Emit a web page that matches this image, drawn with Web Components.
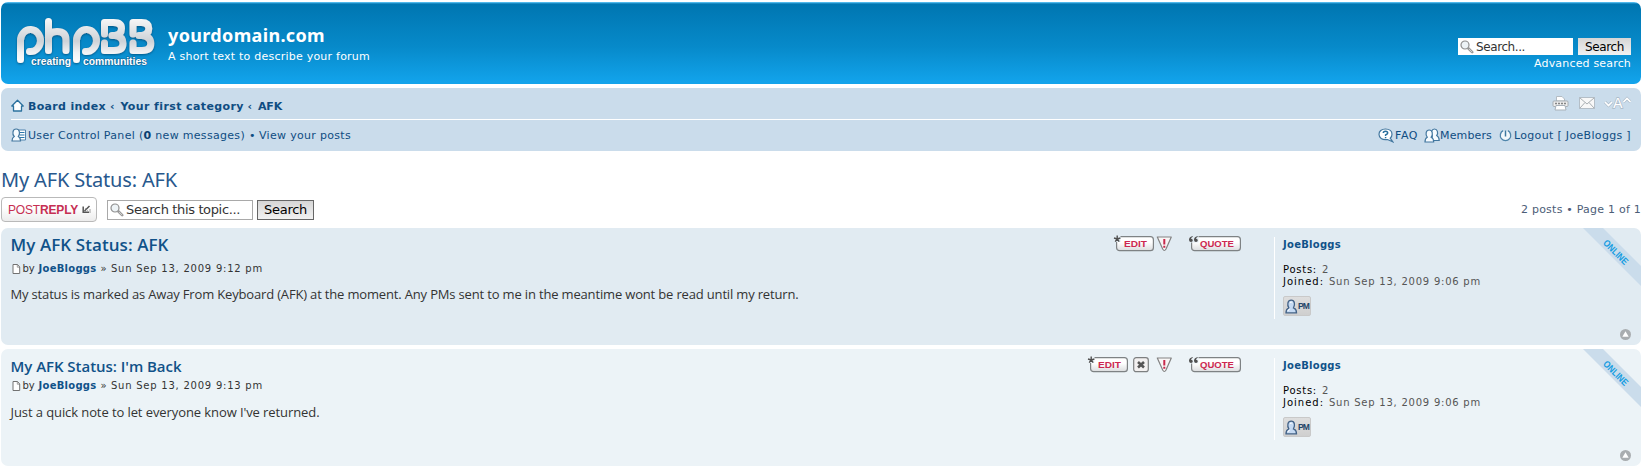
<!DOCTYPE html>
<html lang="en"><head><meta charset="utf-8"><title>yourdomain.com - My AFK Status: AFK</title>
<style>html,body{margin:0;background:#fff;overflow:hidden}body{font-family:"DejaVu Sans",Verdana,sans-serif;font-size:11px;color:#333}</style></head><body><forum-page></forum-page>
<script>
const def=(name,html,after)=>customElements.define(name,class extends HTMLElement{connectedCallback(){if(this.shadowRoot)return;const r=this.attachShadow({mode:'open'});r.innerHTML=typeof html==='function'?html(this):html;if(after)after(this,r)}});

/* one line of text whose tracking is tuned to a given advance width */
def('text-run','<style>:host{display:block;white-space:pre;flex:none;line-height:16px}span{display:inline-block}</style><span><slot></slot></span>',(el,r)=>{
  const s=r.querySelector('span');
  const fit=()=>{const w=+el.getAttribute('w');if(!w)return;s.style.letterSpacing='0';const n=[...el.textContent].length;s.style.letterSpacing=((w-s.getBoundingClientRect().width)/n)+'px';el.style.width=w+'px'};
  requestAnimationFrame(fit);queueMicrotask(fit)});

const ICONS={
home:[13,13,'<path d="M.8 7 6.500 1.200 12.200 7H10.500V12H2.500V7Z" fill="#fff" stroke="#2b719e" stroke-width="1.300" stroke-linejoin="round"/>'],
ucp:[16,14,'<path d="M8 2H14.500V12H8" fill="#fff" stroke="#4f83ae"/><path d="M9 4.500H13.500M9 7H13.500M9 9.500H13.500" stroke="#2b75aa" stroke-width="1.200"/><path d="M1 13C1 10.500 1.700 9.300 3.200 8.500C1 6 1.500 1 5.200 1S9.300 6 7.300 8.500C9 9.300 9.500 10.500 9.500 13Z" fill="#f6fbff" stroke="#42779f" stroke-width="1.200"/>'],
print:[17,16,'<path d="M4.500 6V1.500H10L12.500 4V6Z" fill="#fff" stroke="#b4bcc3"/><rect x="1" y="6" width="15" height="5.500" rx="1" fill="#ededed" stroke="#a0a7ad" stroke-width=".9"/><path d="M3 8.500H14" stroke="#858585" stroke-width="1.400" stroke-dasharray="2 1"/><path d="M4 10.500H13L14 15H3Z" fill="#fff" stroke="#a9b2ba"/>'],
mail:[16,12,'<rect x=".5" y=".5" width="15" height="11" fill="#f8f8f8" stroke="#b4bec7"/><path d="M1 1 8 7 15 1M1 11 6 5.500M15 11 10 5.500" fill="none" stroke="#a0a7ac" stroke-width=".9"/>'],
faq:[16,15,'<path d="M7.500 1C11.500 1 14 3.200 14 6.200C14 8 13.300 9.300 12.200 10.200L14.800 13.800 9.500 11.500C4 12.300 1 9.800 1 6.200C1 3.200 3.500 1 7.500 1Z" fill="#fff" stroke="#42779f" stroke-width="1.200"/><path d="M5.300 5Q5.300 3.200 7.500 3.200T9.700 5Q9.700 6 7.600 6.900V8M7.600 9V10.300" fill="none" stroke="#296f9d" stroke-width="1.500"/>'],
members:[16,15,'<path d="M7.500 12.500C8 9 8.500 8.500 8.300 7.500C6.500 5 7.500 1 10.500 1S14.500 5 12.700 7.500C14.500 8.500 15.200 10 15.200 12.500Z" fill="#f6fbff" stroke="#42779f" stroke-width="1.200"/><path d="M1 14C1 11.500 1.700 10 3.200 9.200C1.200 6.500 1.800 2 5.200 2S9.200 6.500 7.200 9.200C9 10 9.700 11.500 9.700 14Z" fill="#f6fbff" stroke="#42779f" stroke-width="1.200"/>'],
power:[13,13,'<path d="M4.200 1.700A5.200 5.200 0 1 0 8.800 1.700" fill="#f2f8fc" stroke="#4f85aa" stroke-width="1.300"/><path d="M6.500 1.500V7.500" stroke="#3e789f" stroke-width="1.500"/>'],
lens:[14,14,'<path d="M8 8 12.200 12.200" stroke="#9a9a9a" stroke-width="2.600" stroke-linecap="round"/><path d="M9 9 12 12" stroke="#ddd" stroke-width=".8"/><circle cx="5" cy="5" r="4" fill="#edf3f6" stroke="#8f8f8f" stroke-width="1.200"/>'],
page:[9,11,'<path d="M1 .5H5.500L7.700 3V9.500H1Z" fill="#fff" stroke="#727272"/><path d="M5.300 .7V3.200H7.600" fill="none" stroke="#777" stroke-width=".7"/>'],
reply:[9,9,'<path d="M7.500 1 2.500 6M1.200 1.500V7.300H7" fill="none" stroke="#555" stroke-width="1.500"/><path d="M3.500 3.500 5.500 5.500" stroke="#777" stroke-width="1"/><path d="M8 4V8" stroke="#888" stroke-width=".8"/>'],
report:[17,16,'<path d="M1.300 1H15.300L10 13Q8.300 16 6.700 13Z" fill="#f8f6f6" stroke="#838383" stroke-width="1.200" stroke-linejoin="round"/><path d="M8.300 3V8.500M8.300 9.700V11.700" stroke="#c8294b" stroke-width="2"/>'],
del:[16,16,'<rect x=".7" y=".7" width="14.600" height="14" rx="2.500" fill="#f3f1f1" stroke="#7d7f80" stroke-width="1.200"/><path d="M5 5 11 10.500M11 5 5 10.500" stroke="#555" stroke-width="2.600"/>'],
person:[13,15,'<path d="M1 13.800C1 11 1.800 9.800 3.800 8.900C2 6 2.500 1.200 6.200 1.200S10.200 6 8.500 8.900C10.700 9.800 11.500 11 11.500 13.800Z" fill="#c5daf3" stroke="#426287" stroke-width="1.300"/><path d="M5 3.500Q6.500 2.500 7.500 4M3 12Q3 10.500 5 9.900" fill="none" stroke="#fff"/>'],
top:[11,11,'<circle cx="5.500" cy="5.500" r="5.500" fill="#a9adb0"/><path d="M5.500 2.300 8.700 7.800H2.300Z" fill="#fff"/>']};
def('ui-icon',el=>{const [w,h,p]=ICONS[el.getAttribute('name')];return `<style>:host{display:block;flex:none}svg{display:block}</style><svg width="${w}" height="${h}" viewBox="0 0 ${w} ${h}" fill="none">${p}</svg>`});

def('brand-logo',`<style>:host{display:block;width:142px;height:54px}svg{display:block;overflow:visible}</style>
<svg width="142" height="54" viewBox="0 0 142 54"><defs><linearGradient id="u" gradientUnits="userSpaceOnUse" x1="0" y1="2" x2="0" y2="48"><stop offset="0" stop-color="#f8f8f8"/><stop offset=".5" stop-color="#cdd2d7"/><stop offset=".75" stop-color="#f0f2f4"/><stop offset="1" stop-color="#fff"/></linearGradient><filter id="s" x="-10%" y="-10%" width="120%" height="130%"><feDropShadow dx="0" dy="1" stdDeviation=".8" flood-color="#034b75" flood-opacity=".8"/></filter></defs>
<g filter="url(#s)" fill="none" stroke="url(#u)" stroke-width="7" stroke-linecap="round" stroke-linejoin="round">
<path d="M4.500 43.500V24.500A10 11 0 1 1 13.500 35.500"/><path d="M32.500 5.500V34.500M32.500 21Q34 15.500 41 15.500Q50 15.500 50 24V34.500"/><path d="M60.500 43.500V24.500A10 11 0 1 1 69.500 35.500"/>
<path d="M88.500 18V6.500H97.500Q105.500 6.500 105.500 12.500Q105.500 18.500 99 19.500H96M99 19.500Q107 20.500 107 27.500Q107 34.500 98 34.500H88.500V27"/><path d="M117 18V6.500H125.500Q132.800 6.500 132.800 12.500Q132.800 18.500 126 19.500H123M126 19.500Q134.800 20.500 134.800 27.500Q134.800 34.500 126 34.500H117V27"/></g>
<g font-family="Liberation Sans,Arial,sans-serif" font-size="10.500" fill="#fff" stroke="#14679a" stroke-width="1.200" paint-order="stroke" font-weight="bold"><text x="15" y="48.500" textLength="40" lengthAdjust="spacingAndGlyphs">creating</text><text x="67" y="48.500" textLength="64" lengthAdjust="spacingAndGlyphs">communities</text></g></svg>`);

def('search-form',el=>{const big=el.hasAttribute('big');return `<style>:host{display:flex;gap:${big?'4px':'5px'};font-size:${big?13:12}px;color:#333}
.i{box-sizing:border-box;display:flex;align-items:center;background:#fff;width:${big?146:115}px;height:${big?20:17}px;border:${big?'1px solid #a9a9a9':'0'};padding-left:2px;gap:2px}
.b{box-sizing:border-box;display:flex;align-items:center;justify-content:center;width:${big?57:53}px;height:${big?20:17}px;color:#000;background:linear-gradient(#d6d6d6,#f1f1f1);border:${big?'1px solid #666':'0'}}</style>
<div class="i"><ui-icon name="lens"></ui-icon><text-run w="${big?114:49}">${el.getAttribute('hint')}</text-run></div><div class="b"><text-run w="${big?43:39}">Search</text-run></div>`});

def('header-bar',`<style>:host{display:flex;box-sizing:border-box;height:82px;border-radius:7px;background:linear-gradient(#6aceff 0,#0076b1 2px,#078aca 45px,#12a3eb 80px);color:#fff;padding:14px 10px 0 15px}
.t{margin-left:10px;padding-top:8px;flex:1}.n{font:bold 18px "Noto Sans","DejaVu Sans",sans-serif}.n text-run{line-height:22px}.d{margin-top:3px}
.r{padding-top:22px;display:flex;flex-direction:column;align-items:flex-end}.r text-run{margin-top:1px}</style>
<brand-logo></brand-logo><div class="t"><div class="n"><text-run w="157">yourdomain.com</text-run></div><div class="d"><text-run w="202">A short text to describe your forum</text-run></div></div>
<div class="r"><search-form hint="Search..."></search-form><text-run w="97">Advanced search</text-run></div>`);

def('nav-bar',`<style>:host{display:block;box-sizing:border-box;height:63px;margin-top:4px;border-radius:7px;background:#cadceb;padding:0 10px 0 10px;color:#4c5d77}
.row{display:flex;align-items:center;color:#0f4d82}.a{height:32px;border-bottom:1px solid #fff;font-weight:bold;box-sizing:border-box}.a text-run{margin-top:6px}.a ui-icon{margin-top:3px}.a .low{margin-top:-2px}.b{height:23px}.b text-run{margin-top:8px}.b ui-icon{margin-top:7px}.sp{flex:1}b{color:#0b3f70}
.fs{display:block;margin:-3px 0 0 9px}</style>
<div class="row a"><ui-icon name="home"></ui-icon><text-run w="78" style="margin-left:4px">Board index</text-run><text-run w="6" style="margin-left:4px">‹</text-run><text-run w="123" style="margin-left:4.500px">Your first category</text-run><text-run w="6" style="margin-left:4px">‹</text-run><text-run w="24" style="margin-left:4.500px">AFK</text-run><span class="sp"></span><ui-icon name="print" class="low"></ui-icon><ui-icon name="mail" class="low" style="margin-left:10px"></ui-icon>
<svg class="fs" width="27" height="15" viewBox="0 0 27 15"><path d="M1 7 4.500 10.500 8 7M19.500 7 23 3.500 26.500 7" fill="none" stroke="#a9b9c7" stroke-width="3"/><path d="M1 7 4.500 10.500 8 7M19.500 7 23 3.500 26.500 7" fill="none" stroke="#fff" stroke-width="1.700"/><text x="9" y="13" font-family="DejaVu Sans" font-weight="normal" font-size="14" fill="#fff" stroke="#a9b9c7" stroke-width="1.400" paint-order="stroke">A</text></svg></div>
<div class="row b"><ui-icon name="ucp"></ui-icon><text-run w="217" style="margin-left:1px">User Control Panel (<b>0</b> new messages)</text-run><text-run w="6" style="margin-left:4px">•</text-run><text-run w="92" style="margin-left:4px">View your posts</text-run><span class="sp"></span>
<ui-icon name="faq"></ui-icon><text-run w="23" style="margin-left:1px">FAQ</text-run><ui-icon name="members" style="margin-left:6px"></ui-icon><text-run w="52">Members</text-run><ui-icon name="power" style="margin-left:7px"></ui-icon><text-run w="117" style="margin-left:2px">Logout [ JoeBloggs ]</text-run></div>`);

def('tag-button',el=>{const q=el.getAttribute('kind')==='quote',w=q?50:38;return `<style>:host{display:block;flex:none;width:${w+2}px;height:16px}svg{display:block;overflow:visible}</style><svg width="${w+2}" height="16"><defs><linearGradient id="b" x1="0" y1="0" x2="0" y2="1"><stop offset=".4" stop-color="#fff"/><stop offset="1" stop-color="#dadcde"/></linearGradient></defs><rect x="2.600" y=".7" width="${w-1.200}" height="14" rx="3" fill="url(#b)" stroke="#7e8284" stroke-width="1.200"/><text x="${q?11:10}" y="11" font-family="Liberation Sans" font-weight="bold" font-size="9.800" fill="#cd2850" textLength="${q?34:23}" lengthAdjust="spacingAndGlyphs">${q?'QUOTE':'EDIT'}</text>${q?'<path d="M-.3 -1H9.500V6.500H-.3Z" fill="var(--post-bg)"/><path d="M3.600 0Q-.2 1 0 4Q.2 6 2 6Q3.800 6 3.800 4.300Q3.800 2.700 2 2.700Q2.400 1.300 3.800 .8ZM8.600 0Q4.800 1 5 4Q5.200 6 7 6Q8.800 6 8.800 4.300Q8.800 2.700 7 2.700Q7.400 1.300 8.800 .8Z" fill="#505050"/>':'<path d="M0 -1H6.500V6H0Z" fill="var(--post-bg)"/><path d="M3.200 -.5V3M0 2 3.200 3 6.400 2M1.200 5.700 3.200 3 5.200 5.700" fill="none" stroke="#505050" stroke-width="1.400"/>'}</svg>`});

def('pm-button','<style>:host{display:flex;box-sizing:border-box;width:28px;height:20px;border:1px solid #c9c9c9;border-radius:2px;background:linear-gradient(#dedede,#cfcfcf);align-items:center;padding-left:1px;font:bold 8.500px "Liberation Sans",sans-serif;color:#24466a}</style><ui-icon name="person"></ui-icon><text-run w="11">PM</text-run>');

def('author-profile','<style>:host{display:block;box-sizing:border-box;width:367px;height:82px;border-left:1px solid #fff;padding:0 0 0 8px;font-size:10px;color:#6b7680}.n{font-weight:bold;color:#105289}.n text-run{line-height:16px}.l{display:flex;gap:5px;color:#555}.l text-run{line-height:12px}.k{color:#000}pm-button{margin-top:8px}</style><div class="n"><text-run w="58">JoeBloggs</text-run></div><div class="l" style="margin-top:11px"><text-run class="k" w="34">Posts:</text-run><text-run w="7">2</text-run></div><div class="l"><text-run class="k" w="41">Joined:</text-run><text-run w="152">Sun Sep 13, 2009 9:06 pm</text-run></div><pm-button></pm-button>');

def('forum-post',el=>{const f=el.hasAttribute('first');return `<style>:host{--post-bg:${f?'#e1ebf2':'#ecf3f7'};display:flex;position:relative;overflow:hidden;box-sizing:border-box;height:117px;border-radius:7px;background:var(--post-bg);padding:10px 0 0 9.500px}
.m{flex:1}.h{display:flex;height:${f?23:19}px;color:#105289;font:600 ${f?17:15}px "Open Sans","Noto Sans",sans-serif}.h text-run{line-height:20px;margin-top:-3px}
.act{display:flex;margin:-2px 33px 0 auto}.by{display:flex;font-size:10px;height:16px;align-items:center}.by b{color:#105289}
.c{margin-top:${f?'9px':'10px'};font:13px "Open Sans","Noto Sans",sans-serif;color:#333}
author-profile{margin-top:-1px}.rib{position:absolute;right:0;top:0}.top{position:absolute;right:10px;bottom:5px}</style>
<div class="m"><div class="h"><text-run w="${f?158:171}"><slot name="title"></slot></text-run><div class="act"><tag-button kind="edit" style="margin-right:${f?2:5}px"></tag-button>${f?'':'<ui-icon name="del" style="margin-right:7px"></ui-icon>'}<ui-icon name="report" style="margin-right:16px"></ui-icon><tag-button kind="quote"></tag-button></div></div>
<div class="by"><ui-icon name="page" style="margin:0 2px 0 1px"></ui-icon><text-run w="12">by</text-run><text-run w="58" style="margin-left:4px"><b>JoeBloggs</b></text-run><text-run w="7" style="margin-left:4px">»</text-run><text-run w="152" style="margin-left:3.500px"><slot name="date"></slot></text-run></div>
<div class="c"><text-run w="${f?788:309}"><slot></slot></text-run></div></div><author-profile></author-profile>
<svg class="rib" width="60" height="60" viewBox="0 0 60 60"><path d="M2 0H22L60 38V58Z" fill="#cadceb"/><text transform="translate(21.500 15.500) rotate(45)" font-family="Liberation Sans" font-weight="bold" font-size="9.500" fill="#159de2" textLength="31" lengthAdjust="spacingAndGlyphs">ONLINE</text></svg><ui-icon class="top" name="top"></ui-icon>`},(el,r)=>{
  for(const run of r.querySelectorAll('text-run')){const s=run.querySelector('slot');if(s){run.textContent=s.name?el.querySelector('[slot='+s.name+']').textContent:[...el.childNodes].filter(n=>n.nodeType===3).map(n=>n.data).join('').trim()}}});

def('topic-bar',`<style>:host{display:block;height:77px}.h{padding-top:17px;font:20px "Noto Sans",sans-serif;color:#28588d}.h text-run{line-height:24px}
.r{display:flex;align-items:flex-start;margin-top:5px}.p{box-sizing:border-box;width:96px;height:25px;border:1px solid #b9b9b9;border-radius:4px;background:linear-gradient(#fff 40%,#ececec);display:flex;align-items:center;padding-left:6px;font:12px "Liberation Sans",sans-serif;color:#c62f52}.p text-run{margin-right:4px}
search-form{margin:3px 0 0 10px}.c{margin:5px 0 0 auto;color:#4c5d77}</style>
<div class="h"><text-run w="176">My AFK Status: AFK</text-run></div><div class="r"><div class="p"><text-run w="70">POST<b>REPLY</b></text-run><ui-icon name="reply"></ui-icon></div><search-form big hint="Search this topic..."></search-form><text-run class="c" w="120">2 posts • Page 1 of 1</text-run></div>`);

def('forum-page',`<style>:host{display:block;padding:2px 0 0 1px;height:466px;box-sizing:border-box}forum-post+forum-post{margin-top:4px}</style>
<header-bar></header-bar><nav-bar></nav-bar><topic-bar></topic-bar>
<forum-post first><span slot="title">My AFK Status: AFK</span><span slot="date">Sun Sep 13, 2009 9:12 pm</span>My status is marked as Away From Keyboard (AFK) at the moment. Any PMs sent to me in the meantime wont be read until my return.</forum-post>
<forum-post><span slot="title">My AFK Status: I'm Back</span><span slot="date">Sun Sep 13, 2009 9:13 pm</span>Just a quick note to let everyone know I've returned.</forum-post>`);
</script></body></html>
